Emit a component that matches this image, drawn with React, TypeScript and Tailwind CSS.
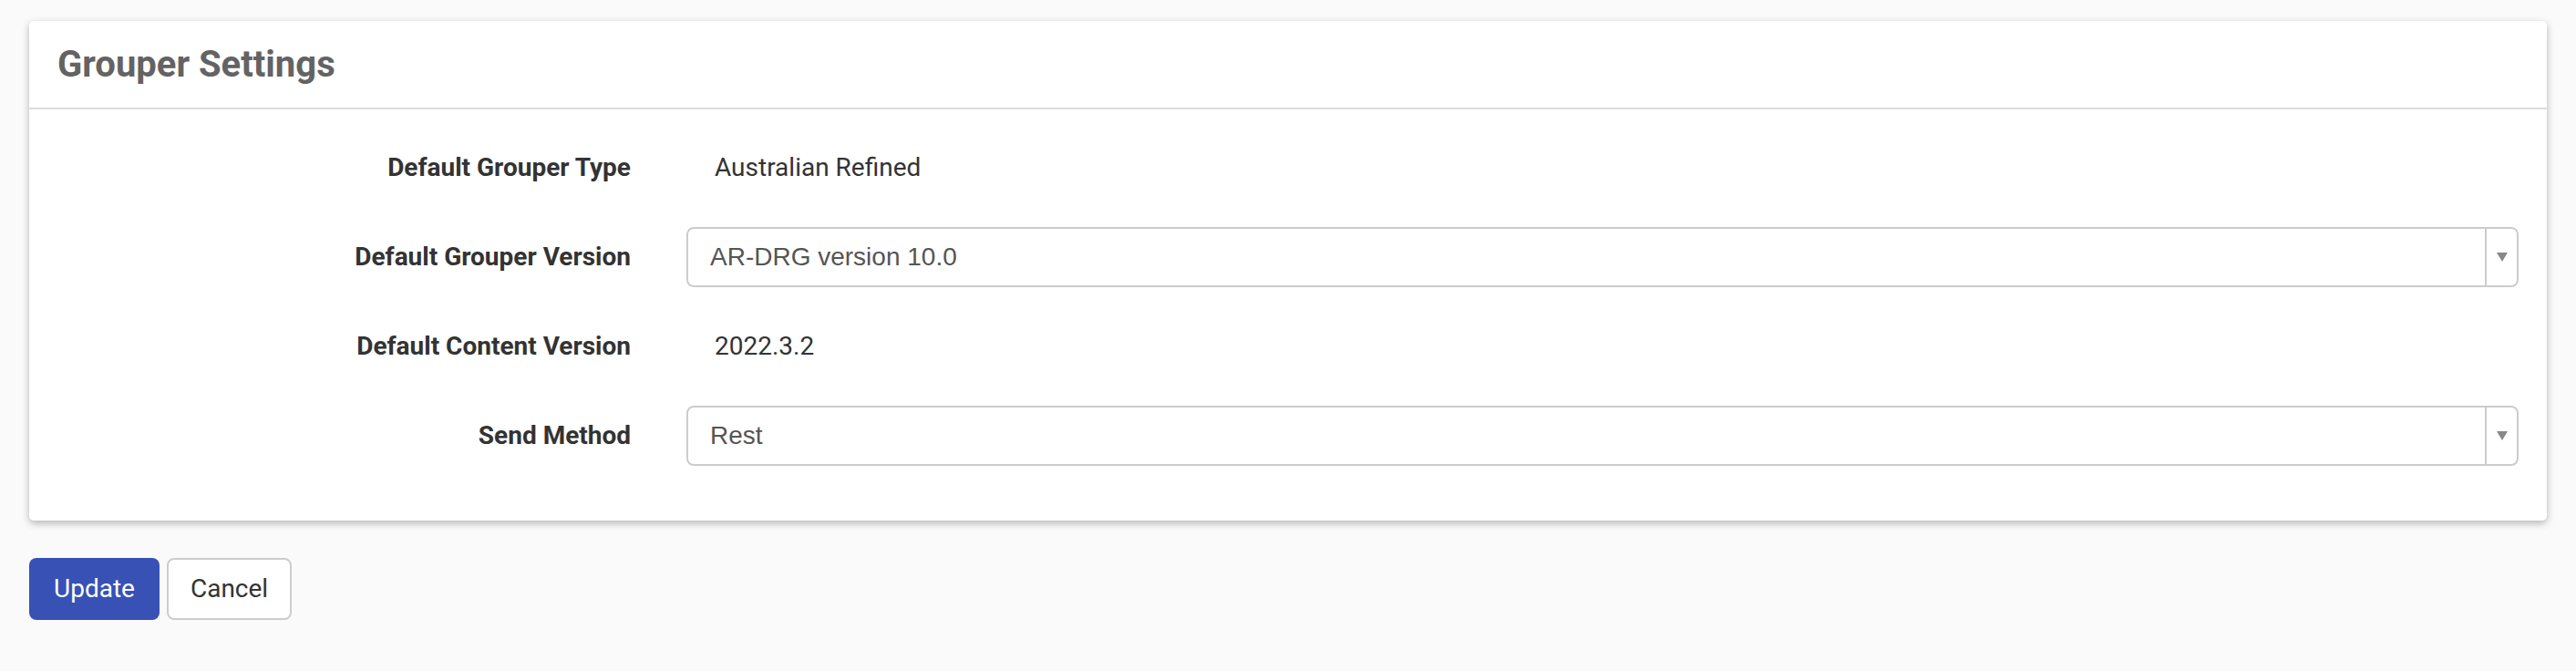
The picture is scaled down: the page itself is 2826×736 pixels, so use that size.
import React from 'react';

type Row =
  | { label: string; kind: 'text'; value: string }
  | { label: string; kind: 'select'; value: string };

const rows: Row[] = [
  { label: 'Default Grouper Type', kind: 'text', value: 'Australian Refined' },
  { label: 'Default Grouper Version', kind: 'select', value: 'AR-DRG version 10.0' },
  { label: 'Default Content Version', kind: 'text', value: '2022.3.2' },
  { label: 'Send Method', kind: 'select', value: 'Rest' },
];

function SelectBox({ value }: { value: string }) {
  return (
    <div className="flex h-[66px] flex-1 items-stretch rounded-[8px] border-2 border-[#cccccc] bg-white">
      <div className="flex flex-1 items-center pl-[24px] font-['Liberation_Sans',Arial,sans-serif] text-[28px] text-[#555555]">
        {value}
      </div>
      <div className="flex w-[35px] items-center justify-center border-l-2 border-[#cccccc]">
        <svg width="12" height="10" viewBox="0 0 12 10">
          <path d="M0 0 H12 L6 10 Z" fill="#888888" />
        </svg>
      </div>
    </div>
  );
}

export default function App() {
  return (
    <div className="min-h-screen bg-[#fafafa] px-[32px] pt-[23px] font-['Roboto',sans-serif] text-[#333333]">
      <div className="rounded-[5px] bg-white shadow-[0_3px_8px_rgba(0,0,0,0.28)]">
        <div className="flex h-[97px] items-center border-b-2 border-[#dddddd] px-[31px]">
          <h1 className="text-[40px] font-bold leading-none text-[#636363]">Grouper Settings</h1>
        </div>

        <div className="flex flex-col gap-[32px] px-[31px] pb-[60px] pt-[31px]">
          {rows.map((row) => (
            <div key={row.label} className="flex h-[66px] items-center">
              <div className="w-[629px] shrink-0 text-right text-[28px] font-bold">{row.label}</div>
              <div className="ml-[61px] flex flex-1 items-center">
                {row.kind === 'select' ? (
                  <SelectBox value={row.value} />
                ) : (
                  <span className="pl-[31px] text-[28px]">{row.value}</span>
                )}
              </div>
            </div>
          ))}
        </div>
      </div>

      <div className="mt-[41px] flex gap-[8px]">
        <button className="h-[68px] rounded-[8px] bg-[#3751b5] px-[27px] text-[28px] text-white">
          Update
        </button>
        <button className="h-[68px] rounded-[8px] border-2 border-[#cccccc] bg-white px-[24px] text-[28px] text-[#333333]">
          Cancel
        </button>
      </div>
    </div>
  );
}
